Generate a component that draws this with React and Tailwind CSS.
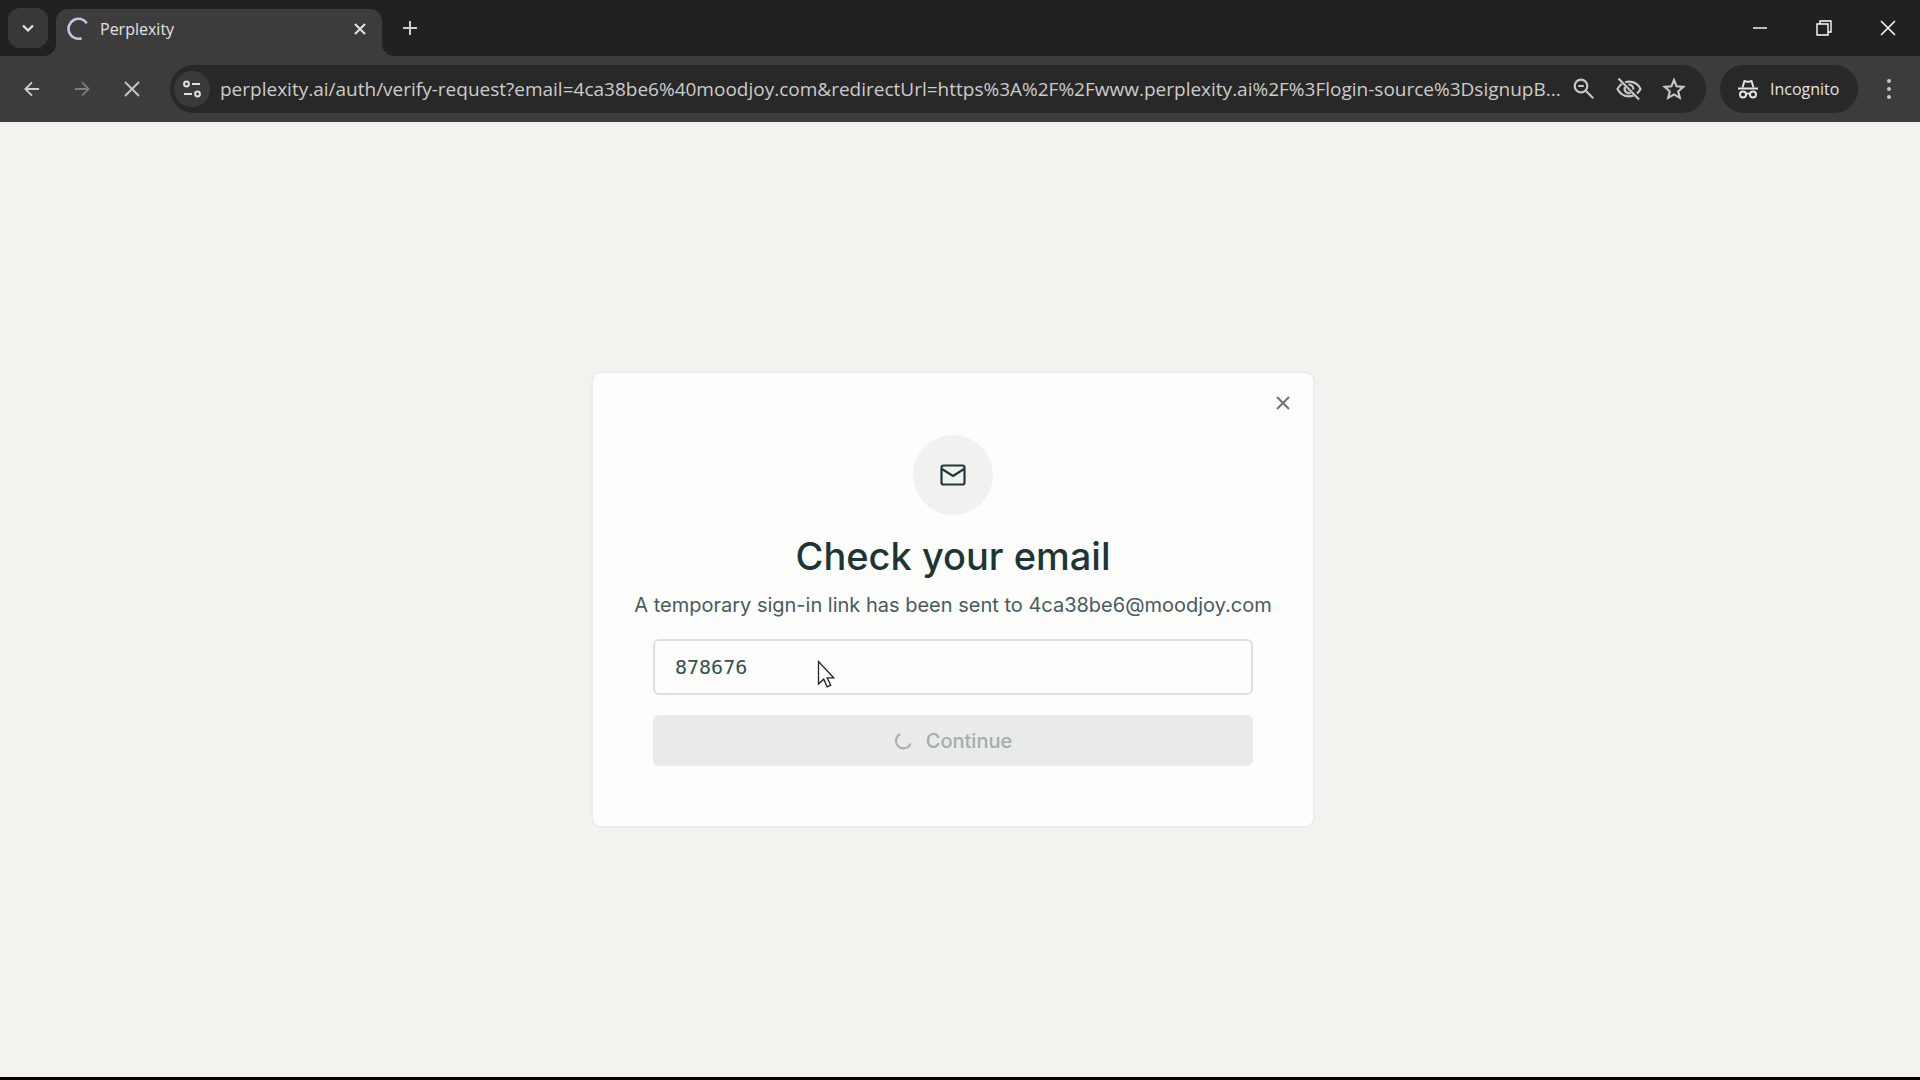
import React, { useState } from "react";

const PAGE_URL =
  "perplexity.ai/auth/verify-request?email=4ca38be6%40moodjoy.com&redirectUrl=https%3A%2F%2Fwww.perplexity.ai%2F%3Flogin-source%3DsignupB...";

const iconProps = {
  fill: "none",
  stroke: "currentColor",
  "aria-hidden": true,
};

function TabStrip() {
  return (
    <div className="flex h-14 items-end justify-between bg-[#212121] pl-2">
      <div className="flex h-full items-end">
        <button
          type="button"
          aria-label="Search tabs"
          className="mb-2 flex size-10 items-center justify-center rounded-xl bg-[#383838] text-[#e3e3e3]"
        >
          <svg {...iconProps} viewBox="0 0 14 14" className="size-[14px]" strokeWidth="2.2">
            <path d="M2 4.5l5 5 5-5" />
          </svg>
        </button>
        <div className="relative ml-2 flex h-[47px] w-[326px] items-center rounded-t-xl bg-[#3c3c3c] pr-[14px] pb-2 pl-[10px] text-[#e3e3e3]">
          <span className="absolute bottom-0 -left-3 size-3 bg-[radial-gradient(circle_at_0_0,#212121_12px,#3c3c3c_12px)]" />
          <span className="absolute -right-3 bottom-0 size-3 bg-[radial-gradient(circle_at_100%_0,#212121_12px,#3c3c3c_12px)]" />
          <svg {...iconProps} viewBox="0 0 24 24" className="size-6" strokeWidth="2.6">
            <path d="M20.8 6.2A10 10 0 1 0 15.6 21.3" stroke="#c3c3e6" />
          </svg>
          <span className="ml-[10px] flex-1 font-['Open_Sans','Noto_Sans',sans-serif] text-base">Perplexity</span>
          <button type="button" aria-label="Close tab" className="flex size-4 items-center justify-center">
            <svg {...iconProps} viewBox="0 0 12 12" className="size-3" strokeWidth="2">
              <path d="M1 1l10 10M11 1L1 11" />
            </svg>
          </button>
        </div>
        <button type="button" aria-label="New tab" className="mb-5 ml-5 flex size-4 items-center justify-center text-[#d0d0d0]">
          <svg {...iconProps} viewBox="0 0 16 16" className="size-4" strokeWidth="2">
            <path d="M8 1v14M1 8h14" />
          </svg>
        </button>
      </div>
      <div className="flex h-full items-center text-white">
        <button type="button" aria-label="Minimize" className="flex h-full w-16 items-center justify-center">
          <svg {...iconProps} viewBox="0 0 16 16" className="size-4" strokeWidth="1.4">
            <path d="M1 8h14" />
          </svg>
        </button>
        <button type="button" aria-label="Restore" className="flex h-full w-16 items-center justify-center">
          <svg {...iconProps} viewBox="0 0 16 16" className="size-4" strokeWidth="1.4">
            <path d="M1 4h11v11H1zM4 4V1h11v11h-3" />
          </svg>
        </button>
        <button type="button" aria-label="Close" className="flex h-full w-16 items-center justify-center">
          <svg {...iconProps} viewBox="0 0 16 16" className="size-4" strokeWidth="1.5">
            <path d="M1 1l14 14M15 1L1 15" />
          </svg>
        </button>
      </div>
    </div>
  );
}

function Toolbar() {
  const [url, setUrl] = useState(PAGE_URL);

  return (
    <div className="flex h-[66px] items-center bg-[#3c3c3c] px-5 text-[#c7c7c7]">
      <div className="flex items-center gap-[26px]">
        <button type="button" aria-label="Back" className="flex size-6 items-center justify-center text-[#d0d0d0]">
          <svg {...iconProps} viewBox="0 0 18 18" className="size-4" strokeWidth="2">
            <path d="M17 9H2M9 1.5L1.5 9 9 16.5" />
          </svg>
        </button>
        <button type="button" aria-label="Forward" className="flex size-6 items-center justify-center text-[#7c7c7c]">
          <svg {...iconProps} viewBox="0 0 18 18" className="size-4" strokeWidth="2">
            <path d="M1 9h15M9 1.5L16.5 9 9 16.5" />
          </svg>
        </button>
        <button type="button" aria-label="Stop loading" className="flex size-6 items-center justify-center">
          <svg {...iconProps} viewBox="0 0 16 16" className="size-4" strokeWidth="1.8">
            <path d="M1 1l14 14M15 1L1 15" />
          </svg>
        </button>
      </div>
      <div className="ml-[26px] flex h-12 flex-1 items-center rounded-full bg-[#282828] pr-5 pl-1">
        <button
          type="button"
          aria-label="View site information"
          className="flex size-9 items-center justify-center rounded-full bg-[#3a3a3a] text-[#e0e0e0]"
        >
          <svg {...iconProps} viewBox="0 0 20 20" className="size-5" strokeWidth="2">
            <circle cx="4.5" cy="5" r="2.4" />
            <path d="M10 5h8M2 15h8" />
            <circle cx="15.5" cy="15" r="2.4" />
          </svg>
        </button>
        <input
          type="text"
          aria-label="Address and search bar"
          value={url}
          onChange={(e) => setUrl(e.target.value)}
          className="ml-[10px] min-w-0 flex-1 bg-transparent font-['Open_Sans','Noto_Sans',sans-serif] text-[19px] text-[#cccccc] outline-none"
        />
        <div className="flex items-center gap-5">
          <button type="button" aria-label="Zoom">
            <svg {...iconProps} viewBox="0 0 24 24" className="size-6" strokeWidth="2.2">
              <circle cx="9" cy="9" r="6.3" />
              <path d="M13.8 13.8l7.4 7.4M6.2 9h5.6" />
            </svg>
          </button>
          <button type="button" aria-label="Third-party cookies blocked">
            <svg {...iconProps} viewBox="0 0 26 24" className="h-6 w-[26px]" strokeWidth="2.2">
              <path d="M9.2 5.3C10.4 4.9 11.7 4.7 13 4.7c5.2 0 9.3 2.8 11.5 7.3-.8 1.7-2 3.2-3.5 4.4M17.5 18.4c-1.4.6-2.9.9-4.5.9-5.2 0-9.3-2.8-11.5-7.3 1-2.1 2.5-3.8 4.4-5.1" />
              <path d="M12.5 7.7a4.5 4.5 0 0 1 4.9 5M14.7 16a4.5 4.5 0 0 1-5.7-6" />
              <path d="M2.5 1.5l20.5 21" />
            </svg>
          </button>
          <button type="button" aria-label="Bookmark this tab">
            <svg {...iconProps} viewBox="0 0 24 24" className="size-6" strokeWidth="2.1">
              <path d="M12 3l2.6 6.3 6.8.6-5.2 4.4 1.6 6.6-5.8-3.5-5.8 3.5 1.6-6.6-5.2-4.4 6.8-.6z" />
            </svg>
          </button>
        </div>
      </div>
      <button
        type="button"
        className="ml-[14px] flex h-12 w-[138px] items-center rounded-full bg-[#282828] pl-[17px] text-[#e3e3e3]"
      >
        <svg {...iconProps} viewBox="0 0 22 20" className="h-5 w-[22px]" strokeWidth="2">
          <path d="M1 9.5h20" />
          <path d="M5.5 8.5L7.5 2l3.5 1 3.5-1 2 6.5" />
          <circle cx="6" cy="15.5" r="3" />
          <circle cx="16" cy="15.5" r="3" />
          <path d="M9 15q2-1.2 4 0" />
        </svg>
        <span className="ml-[11px] font-['Open_Sans','Noto_Sans',sans-serif] text-base">Incognito</span>
      </button>
      <button type="button" aria-label="Menu" className="ml-5 flex size-[22px] items-center justify-center">
        <svg viewBox="0 0 6 22" className="h-[22px] w-[6px]" fill="currentColor" aria-hidden="true">
          <circle cx="3" cy="3" r="2" />
          <circle cx="3" cy="11" r="2" />
          <circle cx="3" cy="19" r="2" />
        </svg>
      </button>
    </div>
  );
}

function VerifyCard() {
  const [code, setCode] = useState("878676");

  return (
    <section className="relative flex w-[720px] flex-col items-center rounded-lg bg-[#fdfdfb] px-[60px] pt-[62px] pb-[60px] shadow-[0_0_0_2px_#ececea]">
      <button type="button" aria-label="Close dialog" className="absolute top-[18px] right-[18px] flex size-6 items-center justify-center text-[#6b7475]">
        <svg {...iconProps} viewBox="0 0 14 14" className="size-[14px]" strokeWidth="2">
          <path d="M1 1l12 12M13 1L1 13" />
        </svg>
      </button>
      <div className="flex size-20 items-center justify-center rounded-full bg-[#f1f1ef] text-[#1f3a3d]">
        <svg {...iconProps} viewBox="0 0 26 22" className="h-[22px] w-[26px]" strokeWidth="2.2">
          <rect x="1.5" y="1.5" width="23" height="19" rx="2" />
          <path d="M2 5l11 7 11-7" strokeLinejoin="round" />
        </svg>
      </div>
      <h1 className="mt-4 font-['Inter','Liberation_Sans',sans-serif] text-[38px] leading-[50px] font-medium text-[#1c3638]">
        Check your email
      </h1>
      <p className="mt-[10px] font-['Inter','Liberation_Sans',sans-serif] text-xl leading-7 whitespace-nowrap text-[#475a5c]">
        A temporary sign-in link has been sent to 4ca38be6@moodjoy.com
      </p>
      <form className="mt-5 w-full" onSubmit={(e) => e.preventDefault()}>
        <input
          type="text"
          aria-label="Enter code"
          value={code}
          onChange={(e) => setCode(e.target.value)}
          className="h-14 w-full rounded-md border-2 border-[#dededd] bg-[#fefdfc] px-5 font-['DejaVu_Sans_Mono','Liberation_Mono',monospace] text-xl text-[#2f5350] outline-none"
        />
        <button
          type="submit"
          disabled
          className="mt-5 flex h-[51px] w-full items-center justify-center gap-[14px] rounded-md bg-[#e9eaea] font-['Inter','Liberation_Sans',sans-serif] text-xl font-medium text-[#a6adad]"
        >
          <svg {...iconProps} viewBox="0 0 18 18" className="size-[18px]" strokeWidth="2">
            <path d="M6 2.2A7.5 7.5 0 1 0 16.5 11.5" />
          </svg>
          Continue
        </button>
      </form>
    </section>
  );
}

function MousePointer() {
  return (
    <svg viewBox="0 0 18 28" className="pointer-events-none absolute top-[660px] left-[817px] h-7 w-[18px]" aria-hidden="true">
      <path
        d="M1.5 1.5v22.5l5.2-4.8 3.5 7.6 3.5-1.6-3.5-7.4h6.5z"
        fill="#fff"
        stroke="#222"
        strokeWidth="1.3"
      />
    </svg>
  );
}

export default function App() {
  return (
    <div className="relative flex min-h-screen flex-col border-b-3 border-black bg-[#f3f2ee]">
      <TabStrip />
      <Toolbar />
      <main className="flex flex-1 items-center justify-center pr-[14px]">
        <VerifyCard />
      </main>
      <MousePointer />
    </div>
  );
}
